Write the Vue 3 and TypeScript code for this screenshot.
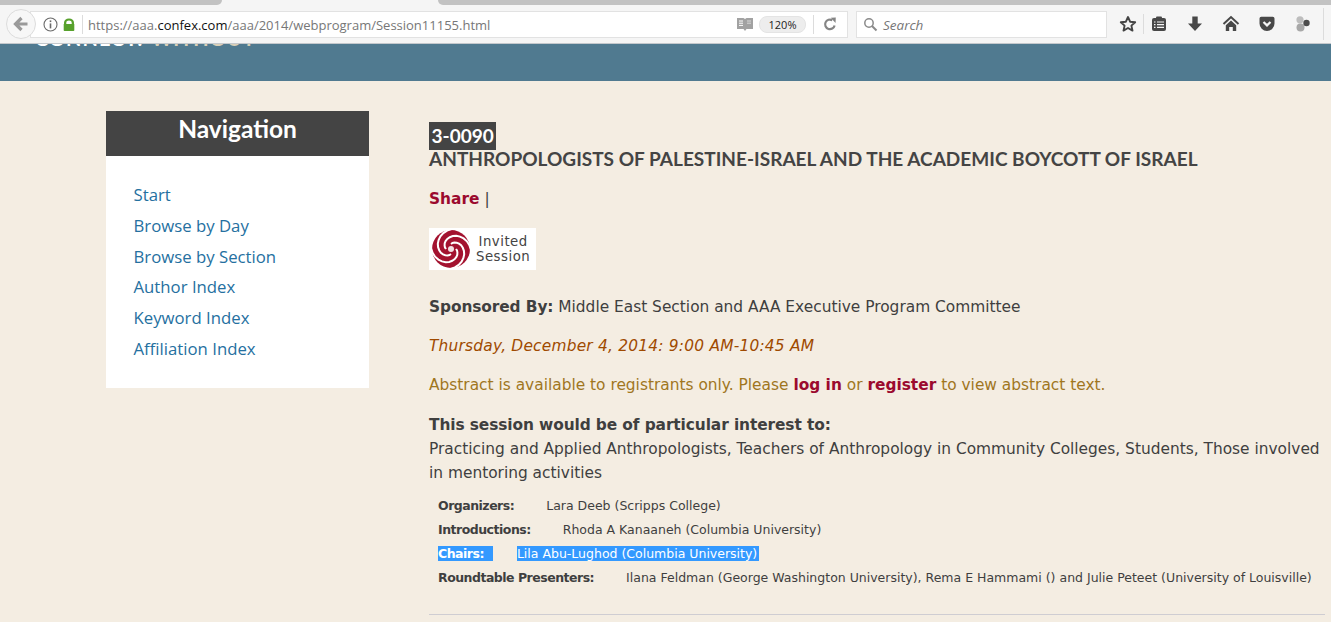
<template>
  <div class="page">
    <div class="tabs">
      <div class="tab tab--left"></div>
      <div class="tab tab--right"></div>
    </div>
    <header class="toolbar">
      <div class="back">
        <svg width="18" height="18" viewBox="0 0 18 18"><path d="M15.500 9H4.500M9.500 3 3.500 9l6 6" fill="none" stroke="#9a9a9a" stroke-width="3.200" /></svg>
      </div>
      <div class="urlbar">
        <svg class="info" width="15" height="15" viewBox="0 0 15 15"><circle cx="7.500" cy="7.500" r="6.500" fill="none" stroke="#6a6a6a" stroke-width="1.100" /><rect x="6.700" y="6.400" width="1.600" height="5" fill="#6a6a6a" /><rect x="6.700" y="3.400" width="1.600" height="1.700" fill="#6a6a6a" /></svg>
        <svg class="lock" width="12" height="13" viewBox="0 0 12 13"><path fill-rule="evenodd" d="M1 6V4.800C1 2.200 3 .5 6 .5s5 1.700 5 4.300V6h.3v6.200a.8.8 0 0 1-.8.800h-9a.8.8 0 0 1-.8-.8V6zM3.300 6h5.400V4.800C8.700 3.400 7.600 2.600 6 2.600s-2.700.8-2.700 2.200z" fill="#57a12c" /></svg>
        <span class="sep url-sep"></span>
        <span class="url">https://aaa.<b>confex.com</b>/aaa/2014/webprogram/Session11155.html</span>
        <svg class="reader" width="16" height="13" viewBox="0 0 16 13"><path d="M0 0h6.500L8 1l1.500-1H16v11H9.500L8 13l-1.500-2H0z" fill="#a2a2a2" /><path d="M2 3h4M2 5.200h4M2 7.400h4" stroke="#fff" stroke-width="1" /><path d="M10 3h4M10 5.200h4" stroke="#d8d8d8" stroke-width="1" /></svg>
        <span class="zoom">120%</span>
        <span class="sep"></span>
        <svg class="reload" width="14" height="14" viewBox="0 0 14 14"><path d="M11.600 8.500A4.800 4.800 0 1 1 9.300 3.200" fill="none" stroke="#858585" stroke-width="2.200" /><path d="M7.800 .8 12.800 .6 12.500 6z" fill="#858585" /></svg>
      </div>
      <div class="search">
        <svg width="15" height="15" viewBox="0 0 15 15"><circle cx="6" cy="6" r="4.200" fill="none" stroke="#8a8a8a" stroke-width="1.500" /><path d="M9 9l4.500 4.500" stroke="#8a8a8a" stroke-width="2" /></svg>
        <span>Search</span>
      </div>
      <div class="icons">
        <svg class="star" width="18" height="18" viewBox="0 0 18 18"><path d="M9 2l2.100 4.700 5.100.5-3.800 3.400 1.100 5L9 13l-4.500 2.600 1.100-5L1.800 7.200l5.100-.5z" fill="none" stroke="#444" stroke-width="1.900" stroke-linejoin="round" /></svg>
        <span class="sep icon-sep"></span>
        <svg width="18" height="18" viewBox="0 0 18 18"><rect x="2" y="3" width="14" height="13" rx="2" fill="#484848" /><rect x="6" y="1.500" width="6" height="3" rx="1" fill="#484848" /><path d="M7 7h7M7 9.700h7M7 12.400h7" stroke="#f5f5f5" stroke-width="1.200" /><path d="M4 7h1.500M4 9.700h1.500M4 12.400h1.500" stroke="#f5f5f5" stroke-width="1.200" /></svg>
        <svg width="18" height="18" viewBox="0 0 18 18"><path d="M6.300 1.500h5.400v7H16L9 16 2 8.500h4.300z" fill="#484848" /></svg>
        <svg width="18" height="18" viewBox="0 0 18 18"><path d="M1.500 9 9 2l7.500 7" fill="none" stroke="#484848" stroke-width="2" /><path d="M3.800 10.200 9 5.400l5.200 4.800V16h-3.400v-4H7.200v4H3.800z" fill="#484848" /></svg>
        <svg width="18" height="18" viewBox="0 0 18 18"><path d="M1.500 3.500A1.800 1.800 0 0 1 3.300 1.700h11.400a1.800 1.800 0 0 1 1.800 1.800V8.500a7.500 7.500 0 0 1-15 0z" fill="#484848" /><path d="M5.500 7 9 10.400 12.500 7" fill="none" stroke="#f5f5f5" stroke-width="2.200" /></svg>
        <svg width="18" height="18" viewBox="0 0 18 18"><circle cx="6" cy="4.800" r="3.600" fill="#bdbdbd" /><circle cx="6.500" cy="12.500" r="4" fill="#a8a8a8" /><circle cx="12.500" cy="8" r="3.200" fill="#4c4c4c" /></svg>
        <span class="sep end-sep"></span>
      </div>
    </header>

    <div class="band">
      <div class="band-title">CONNECT: <span>WITHOUT</span></div>
    </div>

    <main class="main">
      <aside class="nav">
        <h2>Navigation</h2>
        <ul>
          <li v-for="item in navItems" :key="item">{{ item }}</li>
        </ul>
      </aside>

      <section class="content">
        <h1><span class="number">3-0090</span><br />ANTHROPOLOGISTS OF PALESTINE-ISRAEL AND THE ACADEMIC BOYCOTT OF ISRAEL</h1>
        <p class="share"><a>Share</a> <span>|</span></p>
        <div class="badge">
          <svg width="40" height="40" viewBox="0 0 40 40">
            <circle cx="20" cy="20" r="19" fill="#a3122f" />
            <path v-for="arm in swirlArms" :key="arm" :d="arm" fill="none" stroke="#fff" stroke-width="2" />
            <circle cx="20" cy="20" r="3" fill="#f3dfe2" />
          </svg>
          <span>Invited<br />Session</span>
        </div>
        <p class="sponsor"><strong>Sponsored By:</strong> Middle East Section and AAA Executive Program Committee</p>
        <p class="date">Thursday, December 4, 2014: 9:00 AM-10:45 AM</p>
        <p class="abstract">Abstract is available to registrants only. Please <a>log in</a> or <a>register</a> to view abstract text.</p>
        <div class="interest">
          <strong>This session would be of particular interest to:</strong><br />
          Practicing and Applied Anthropologists, Teachers of Anthropology in Community Colleges, Students, Those involved in mentoring activities
        </div>
        <div class="people">
          <div v-for="row in people" :key="row.role" :class="['person', { 'person--selected': row.selected }]">
            <strong class="role">{{ row.role }}:</strong><span class="names">{{ row.names }}</span>
          </div>
        </div>
        <hr />
      </section>
    </main>
  </div>
</template>

<script setup lang="ts">
interface PersonRow {
  role: string;
  names: string;
  selected?: boolean;
}

const navItems: string[] = [
  'Start',
  'Browse by Day',
  'Browse by Section',
  'Author Index',
  'Keyword Index',
  'Affiliation Index',
];

const people: PersonRow[] = [
  { role: 'Organizers', names: 'Lara Deeb (Scripps College)' },
  { role: 'Introductions', names: 'Rhoda A Kanaaneh (Columbia University)' },
  { role: 'Chairs', names: 'Lila Abu-Lughod (Columbia University)', selected: true },
  {
    role: 'Roundtable Presenters',
    names: 'Ilana Feldman (George Washington University), Rema E Hammami () and Julie Peteet (University of Louisville)',
  },
];

// one spiral per arm of the logo, growing outwards from the centre
const swirlArms: string[] = [0, 90, 180, 270].map((start) => {
  const points: string[] = [];
  for (let step = 0; step <= 14; step++) {
    const angle = ((start + step * 14) * Math.PI) / 180;
    const radius = 5 + step * 1.15;
    points.push(`${(20 + radius * Math.cos(angle)).toFixed(1)} ${(20 + radius * Math.sin(angle)).toFixed(1)}`);
  }
  return `M${points.join('L')}`;
});
</script>

<style>
html,
body {
  margin: 0;
  background: #f4ede2;
  overflow: hidden;
}
</style>

<style scoped>
.page {
  width: 1331px;
  height: 622px;
  overflow: hidden;
  font-family: 'DejaVu Sans', Verdana, sans-serif;
  color: #3f3f3f;
}

.tabs {
  height: 5px;
  background: #f5f5f5;
  display: flex;
}

.tab {
  background: #c2c2c2;
}

.tab--left {
  width: 222px;
  border-bottom-right-radius: 6px;
}

.tab--right {
  flex: 1;
  margin-left: 216px;
  border-bottom-left-radius: 6px;
}

.toolbar {
  height: 38px;
  background: #f5f5f5;
  border-bottom: 1px solid #c4c8cc;
  display: flex;
  align-items: center;
  padding-left: 6px;
  font-family: 'Open Sans', sans-serif;
}

.back {
  width: 30px;
  height: 30px;
  border-radius: 50%;
  border: 1px solid #dcdcdc;
  background: #f7f7f7;
  display: flex;
  align-items: center;
  justify-content: center;
  margin-right: -6px;
  position: relative;
  z-index: 1;
  box-sizing: border-box;
}

.urlbar {
  width: 818px;
  height: 27px;
  background: #fff;
  border: 1px solid #e2e2e2;
  box-sizing: border-box;
  display: flex;
  align-items: center;
  padding-left: 12px;
  font-size: 13px;
  color: #777;
}

.info {
  margin-right: 5px;
}

.sep {
  width: 1px;
  height: 19px;
  background: #dcdcdc;
  flex-shrink: 0;
}

.url-sep {
  margin: 0 5px 0 7px;
}

.url b {
  font-weight: 400;
  color: #111;
}

.url {
  flex: 1;
  white-space: nowrap;
  padding-top: 2px;
}

.reader {
  margin-right: 6px;
}

.zoom {
  width: 45px;
  height: 15px;
  line-height: 15px;
  border-radius: 8px;
  background: #ededed;
  border: 1px solid #e4e4e4;
  box-sizing: content-box;
  margin-right: 7px;
  font-size: 11px;
  color: #222;
  text-align: center;
}

.reload {
  margin: 0 10px 0 9px;
}

.search {
  margin-left: 8px;
  width: 251px;
  height: 27px;
  background: #fff;
  border: 1px solid #e2e2e2;
  box-sizing: border-box;
  display: flex;
  align-items: center;
  gap: 5px;
  padding-left: 6px;
  font-size: 13.5px;
  font-style: italic;
  color: #777;
}

.search span {
  padding-top: 2px;
}

.icons {
  display: flex;
  align-items: center;
  gap: 18px;
  margin-left: 12px;
}

.icons .star {
  margin-right: -12px;
}

.icons .icon-sep {
  margin-right: -12px;
  height: 20px;
}

.icons .end-sep {
  margin-left: -7px;
  height: 32px;
}

.band {
  height: 37px;
  background: #507a90;
  overflow: hidden;
}

.band-title {
  margin: -18px 0 0 35px;
  font-family: Lato, sans-serif;
  font-size: 20px;
  font-weight: 700;
  line-height: 24px;
  color: #fff;
  letter-spacing: 1px;
  white-space: nowrap;
}

.band-title span {
  margin-left: 2px;
  color: #d9cfb8;
}

.main {
  display: flex;
  align-items: flex-start;
  padding: 30px 0 0 106px;
}

.nav {
  width: 263px;
  flex-shrink: 0;
  background: #fff;
  padding-bottom: 23px;
  font-family: 'Open Sans', sans-serif;
}

.nav h2 {
  margin: 0;
  height: 45px;
  background: #444;
  color: #fff;
  font-family: Lato, sans-serif;
  font-size: 24.5px;
  font-weight: 700;
  line-height: 36px;
  text-align: center;
}

.nav ul {
  list-style: none;
  margin: 24px 0 0;
  padding: 0 0 0 27.5px;
}

.nav li {
  height: 30.8px;
  line-height: 30.8px;
  font-size: 16.75px;
  color: #25709f;
}

.content {
  margin-left: 60px;
  width: 896px;
  flex-shrink: 0;
  font-size: 15.4px;
}

.content strong {
  letter-spacing: -0.1px;
}

h1 {
  margin: 11px 0 0;
  font-family: Lato, sans-serif;
  font-size: 19.05px;
  font-weight: 700;
  line-height: 24px;
  color: #444;
}

.number {
  display: inline-block;
  background: #444;
  color: #fff;
  line-height: 28px;
  padding: 0 2.5px;
  height: 28px;
  vertical-align: top;
  margin-bottom: -3px;
}

p {
  margin: 0;
}

.share {
  margin-top: 16px;
  line-height: 24px;
}

.share a {
  color: #9b0a2e;
  font-weight: 700;
}

.badge {
  margin-top: 17px;
  width: 107px;
  height: 42px;
  background: #fff;
  display: flex;
  align-items: center;
  gap: 5px;
  padding-left: 2px;
  box-sizing: border-box;
  font-size: 13.3px;
  letter-spacing: 0.5px;
  line-height: 15.5px;
  color: #444;
  text-align: center;
}

.sponsor {
  margin-top: 25px;
  line-height: 24px;
}

.date {
  margin-top: 15px;
  line-height: 24px;
  font-style: italic;
  letter-spacing: 0.22px;
  color: #9f4a00;
}

.abstract {
  margin-top: 15px;
  line-height: 24px;
  color: #a0761e;
}

.abstract a {
  color: #9b0a2e;
  font-weight: 700;
}

.interest {
  margin-top: 16px;
  line-height: 24px;
}

.people {
  margin-top: 9px;
  padding-left: 9px;
  font-size: 12.5px;
}

.person {
  height: 24px;
  line-height: 24px;
  white-space: nowrap;
}

.content .role {
  letter-spacing: -0.5px;
  margin-right: 32px;
}

.person--selected .role,
.person--selected .names {
  background: #3399ff;
  color: #fff;
}

.content .person--selected .role {
  padding-right: 9px;
  margin-right: 24px;
}

.person--selected .names {
  padding-right: 2px;
}

hr {
  margin: 24px 0 0;
  border: 0;
  border-top: 1px solid #cfcdd2;
}
</style>
